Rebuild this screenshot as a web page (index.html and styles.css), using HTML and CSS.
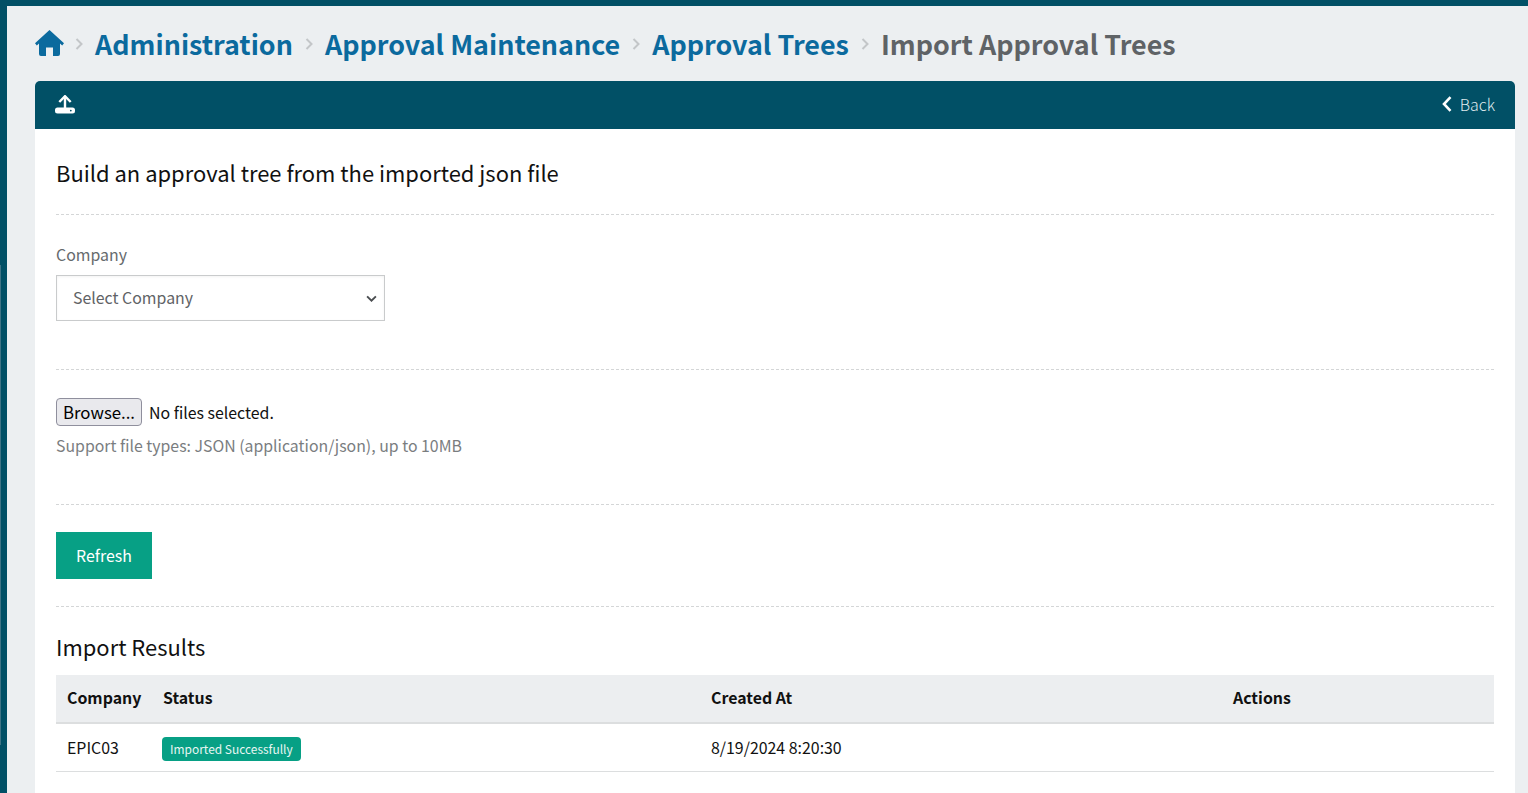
FILE: index.html
```html
<!DOCTYPE html>
<html lang="en">
<head>
<meta charset="utf-8">
<title>Import Approval Trees</title>
<link rel="stylesheet" href="styles.css">
</head>
<body>
<div class="shell">
  <aside class="rail"></aside>
  <main class="content">
    <nav class="crumbs">
      <a class="crumb home" href="#" aria-label="Home">
        <svg class="home-icon" viewBox="0 0 29 26"><path fill="currentColor" d="M14.500 0 29 13.300 27.200 15.400 25 13.500V24a2 2 0 0 1-2 2H18V17.500H11V26H6a2 2 0 0 1-2-2V13.500L1.800 15.400 0 13.300Z"/></svg>
      </a>
      <svg class="sep sep-home" viewBox="0 0 8 14"><path d="M1.500 2 6.500 7l-5 5" fill="none" stroke="currentColor" stroke-width="2"/></svg>
      <a class="crumb" href="#">Administration</a>
      <svg class="sep" viewBox="0 0 8 14"><path d="M1.500 2 6.500 7l-5 5" fill="none" stroke="currentColor" stroke-width="2"/></svg>
      <a class="crumb" href="#">Approval Maintenance</a>
      <svg class="sep" viewBox="0 0 8 14"><path d="M1.500 2 6.500 7l-5 5" fill="none" stroke="currentColor" stroke-width="2"/></svg>
      <a class="crumb" href="#">Approval Trees</a>
      <svg class="sep" viewBox="0 0 8 14"><path d="M1.500 2 6.500 7l-5 5" fill="none" stroke="currentColor" stroke-width="2"/></svg>
      <span class="crumb current">Import Approval Trees</span>
    </nav>
    <section class="card">
      <header class="card-head">
        <svg class="upload-icon" viewBox="0 0 20 20"><path d="M10 1.500V14" stroke="currentColor" stroke-width="2.400" fill="none"/><path d="M4.300 7 10 1.200 15.700 7" stroke="currentColor" stroke-width="2.400" fill="none"/><path fill-rule="evenodd" fill="currentColor" d="M2.500 12.500H17.500A2.500 2.500 0 0 1 20 15v1A2.500 2.500 0 0 1 17.500 18.500H2.500A2.500 2.500 0 0 1 0 16v-1A2.500 2.500 0 0 1 2.500 12.500ZM15.800 14.700a.9.9 0 1 0 0 1.800.9.9 0 0 0 0-1.800Z"/></svg>
        <a class="back" href="#">
          <svg class="back-icon" viewBox="0 0 10 16"><path d="M8.500 1.200 2 8l6.500 6.800" fill="none" stroke="currentColor" stroke-width="2.600"/></svg>
          <span>Back</span>
        </a>
      </header>
      <div class="card-body">
        <div class="block block-title"><h2 class="title">Build an approval tree from the imported json file</h2></div>
        <div class="block block-company">
          <label class="field-label" for="company">Company</label>
          <div class="select-wrap">
            <select id="company" class="select"><option>Select Company</option></select>
            <svg class="chevron" viewBox="0 0 10 6"><path d="M1 1l4 4 4-4" fill="none" stroke="currentColor" stroke-width="1.700"/></svg>
          </div>
        </div>
        <div class="block block-file">
          <div class="file-row"><button class="browse" type="button">Browse...</button><span class="file-name">No files selected.</span></div>
          <p class="help">Support file types: JSON (application/json), up to 10MB</p>
        </div>
        <div class="block block-action"><button class="refresh" type="button">Refresh</button></div>
        <h3 class="results-title">Import Results</h3>
        <table class="results">
          <colgroup><col class="c1"><col class="c2"><col class="c3"><col class="c4"></colgroup>
          <thead><tr><th>Company</th><th>Status</th><th>Created At</th><th>Actions</th></tr></thead>
          <tbody><tr><td>EPIC03</td><td><span class="badge">Imported Successfully</span></td><td>8/19/2024 8:20:30</td><td></td></tr></tbody>
        </table>
      </div>
    </section>
  </main>
</div>
</body>
</html>
```
FILE: styles.css
```css
* { box-sizing: border-box; }
html, body { margin: 0; height: 793px; overflow: hidden; }
body {
  font-family: "Noto Sans CJK SC", "Noto Sans", sans-serif;
  background: #eceff1;
  color: #000;
  font-size: 16px;
}
.shell { display: flex; height: 793px; border-top: 6px solid #015066; }
.rail {
  width: 7px;
  flex: none;
  background: linear-gradient(#3f7486, #3f7486) 0 259px / 1px 480px no-repeat, #015066;
}
.content { flex: 1; padding: 0 13px 0 28px; min-width: 0; }
.crumbs { display: flex; align-items: center; height: 75px; padding-top: 1px; }
.crumb { font-size: 26.900px; font-weight: 700; line-height: 40px; color: #0b6a9e; text-decoration: none; white-space: nowrap; }
.crumb.current { color: #5f6366; }
.home { display: flex; }
.home-icon { width: 29px; height: 26px; display: block; margin-bottom: 2px; }
.sep { width: 8px; height: 14px; color: #c3c6c8; margin: 0 12px; flex: none; }
.sep-home { margin: 0 12px 0 11px; }
.card { background: #fff; border-radius: 5px 5px 0 0; height: 760px; }
.card-head {
  height: 48px;
  background: #015066;
  border-radius: 5px 5px 0 0;
  display: flex;
  align-items: center;
  justify-content: space-between;
  padding: 0 20px;
  color: #fff;
}
.upload-icon { width: 20px; height: 20px; display: block; margin-bottom: 1px; }
.back { display: flex; align-items: center; gap: 8px; color: #dfe8ec; font-size: 16px; line-height: 24px; text-decoration: none; font-weight: 300; margin-bottom: 2px; }
.back-icon { width: 10px; height: 16px; color: #fff; }
.card-body { padding: 0 21px; }
.block { border-bottom: 1px dashed #d4d6d7; }
.block-title { height: 86px; display: flex; align-items: center; padding-top: 2px; }
.title { margin: 0; font-size: 21.950px; font-weight: 400; line-height: 32px; color: #111; }
.block-company { height: 155px; padding-top: 28px; }
.field-label { display: block; font-size: 15.900px; line-height: 24px; color: #666a6d; margin-bottom: 8px; }
.select-wrap { position: relative; width: 329px; height: 46px; }
.select {
  appearance: none;
  width: 100%;
  height: 100%;
  border: 1px solid #c9cbcc;
  border-radius: 0;
  background: #fff;
  box-shadow: inset 0 1px 3px rgba(0, 0, 0, .05);
  padding: 0 16px 2px;
  font: inherit;
  font-size: 15.900px;
  color: #5f6366;
}
.chevron { position: absolute; right: 8px; top: 20px; width: 11px; height: 7px; color: #4a4d50; pointer-events: none; }
.block-file { height: 135px; padding-top: 28px; }
.file-row { display: flex; align-items: center; gap: 7px; height: 28px; }
.browse {
  width: 86px;
  height: 28px;
  padding: 0;
  border: 1px solid #8f8f9d;
  border-radius: 4px;
  background: #e9e9ed;
  font: inherit;
  font-size: 16.800px;
  line-height: 24px;
  color: #000;
}
.file-name { font-size: 15.900px; line-height: 24px; color: #111; padding-top: 2px; }
.help { margin: 8px 0 0; font-size: 15.850px; line-height: 24px; color: #7a7d7f; }
.block-action { height: 102px; padding-top: 27px; }
.refresh {
  width: 96px;
  height: 47px;
  border: 0;
  padding: 0;
  background: #07a085;
  color: #fff;
  font: inherit;
  font-size: 15.900px;
}
.results-title { margin: 0; padding-top: 22px; height: 68px; font-size: 21.950px; line-height: 36px; font-weight: 400; color: #111; }
.results { width: 100%; table-layout: fixed; border-collapse: collapse; }
.c1 { width: 96px; }
.c2 { width: 548px; }
.c3 { width: 522px; }
.results th {
  height: 48px;
  background: #eceef0;
  border-bottom: 2px solid #dcdedf;
  text-align: left;
  padding: 0 11px 2px;
  font-size: 15.900px;
  font-weight: 700;
  color: #111;
}
.results td {
  height: 48px;
  padding: 0 11px;
  border-bottom: 1px solid #dcdedf;
  font-size: 15.900px;
  color: #111;
}
.badge {
  display: inline-block;
  background: #07a085;
  color: #e8f6f3;
  border-radius: 4px;
  font-size: 11.950px;
  line-height: 24px;
  padding: 0 8px;
  white-space: nowrap;
  width: 139px;
  margin: 2px 0 0 -1px;
  vertical-align: middle;
}
```
